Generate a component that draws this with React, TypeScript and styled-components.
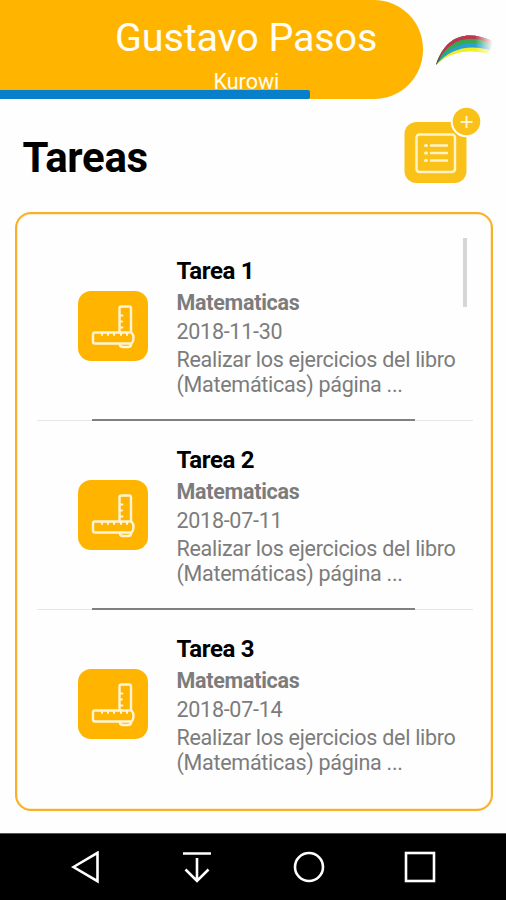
import React from "react";
import styled, { createGlobalStyle } from "styled-components";

const GlobalStyle = createGlobalStyle`
  * { box-sizing: border-box; }
  body { margin: 0; background: #fefefe; font-family: Roboto, "Liberation Sans", sans-serif; }
`;

const Screen = styled.main`
  display: flex;
  flex-direction: column;
  width: 506px;
  height: 900px;
  overflow: hidden;
`;

const Header = styled.header`
  display: flex;
  height: 99px;
`;

const Banner = styled.div`
  display: flex;
  flex-direction: column;
  width: 422.5px;
  height: 98.5px;
  background: #ffb500;
  border-radius: 0 49px 49px 0;
  color: #fffdf5;
`;

const UserName = styled.div`
  height: 72px;
  padding: 14px 0 0 115px;
  font-size: 39.5px;
  line-height: 48px;
  letter-spacing: -0.12px;
  white-space: nowrap;
`;

const School = styled.div`
  height: 18px;
  padding-left: 213.5px;
  font-size: 21.5px;
  line-height: 20px;
`;

const Progress = styled.div`
  width: 310px;
  height: 8.5px;
  background: #087fca;
  border-radius: 0 2px 2px 0;
`;

const Logo = styled.svg`
  width: 64px;
  height: 40px;
  margin: 30px 0 0 10px;
`;

const TitleBar = styled.section`
  display: flex;
  justify-content: space-between;
  height: 113px;
  padding: 5px 22px 0 22.5px;
`;

const Title = styled.h1`
  margin: 29px 0 0;
  font-size: 42px;
  line-height: 50px;
  letter-spacing: -0.3px;
  font-weight: 700;
  color: #000;
`;

const AddButton = styled.button`
  width: 82px;
  height: 82px;
  padding: 0;
  border: 0;
  background: none;
  svg { display: block; }
`;

const Card = styled.section`
  display: flex;
  width: 478px;
  height: 599px;
  margin-left: 14.5px;
  padding: 18px 17.5px 0 20px;
  border: 2px solid #f7b02a;
  border-radius: 16px;
  box-shadow: inset 0 0 0 0.5px #fbdc9c;
`;

const List = styled.ul`
  position: relative;
  flex: 1;
  margin: 0;
  padding: 0;
  list-style: none;
`;

const ScrollThumb = styled.div`
  position: absolute;
  right: 6px;
  top: 5.5px;
  width: 4.5px;
  height: 69.5px;
  background: #d6d6d6;
`;

const Row = styled.li`
  display: grid;
  grid-template-columns: 70px 1fr;
  grid-template-rows: 187px 2px;
  column-gap: 29px;
  padding-left: 41px;
`;

const SubjectIcon = styled.svg`
  width: 70px;
  height: 70px;
  margin-top: 58.5px;
`;

const Details = styled.div`
  padding-top: 24px;
  color: #7c7c7c;
  font-size: 21.5px;
  line-height: 29px;
  letter-spacing: -0.28px;
  white-space: nowrap;
`;

const TaskName = styled.h2`
  margin: 0 0 2px;
  font-size: 24px;
  line-height: 30px;
  letter-spacing: -0.35px;
  font-weight: 700;
  color: #000;
`;

const Subject = styled.div`
  font-weight: 700;
`;

const Description = styled.p`
  margin: 2px 0 0;
  line-height: 24.7px;
`;

const Divider = styled.div`
  grid-column: 1 / -1;
  display: flex;
  align-items: flex-end;
  width: 436px;
  margin-left: -41px;
`;

const Line = styled.span<{ $strong?: boolean }>`
  flex: ${(p) => (p.$strong ? "0 0 323px" : "0 0 55px")};
  height: ${(p) => (p.$strong ? "2.5px" : "1px")};
  background: ${(p) => (p.$strong ? "#808080" : "#e6e6e6")};
  &:last-child { flex: 1; }
`;

const NavBar = styled.nav`
  display: flex;
  justify-content: space-between;
  height: 67px;
  margin-top: 22px;
  padding: 17px 69px 0;
  background: #000;
  border-top: 1px solid #555;
  svg { display: block; width: 34px; height: 34px; fill: none; stroke: #fff; stroke-width: 2.6; }
`;

const RainbowLogo = () => (
  <Logo viewBox="0 0 64 40">
    <defs>
      <linearGradient id="fade" x1="0" x2="1">
        <stop offset="0" stopColor="#fff" />
        <stop offset=".7" stopColor="#fff" />
        <stop offset="1" stopColor="#fff" stopOpacity="0" />
      </linearGradient>
      <mask id="tail" maskUnits="userSpaceOnUse" x="0" y="0" width="64" height="40">
        <rect width="60" height="40" fill="url(#fade)" />
      </mask>
      <filter id="soft" colorInterpolationFilters="sRGB"><feGaussianBlur stdDeviation=".5" /></filter>
    </defs>
    <g mask="url(#tail)" filter="url(#soft)">
      <path d="M3 35C13 4 35 0 60 11L56 24C37 19 18 21 3 35Z" fill="#f2ee24" />
      <path d="M3 35C13 4 35 0 60 11L57 20C36 14 17 18 3 35Z" fill="#2a9fd0" />
      <path d="M3 35C13 4 35 0 60 11L58 17C36 8 16 14 3 35Z" fill="#36a852" />
      <path d="M3 35C13 4 35 0 60 11L58 14C36 3 15 9 3 35Z" fill="#c43350" />
      <path d="M3 35Q5 29 8 25Q7 30 3 35Z" fill="#22615a" />
    </g>
  </Logo>
);

const AddTaskIcon = () => (
  <svg width="82" height="82" viewBox="0 0 82 82">
    <rect x="2.5" y="18" width="62" height="61" rx="12" fill="#fac119" />
    <g fill="none" stroke="#fff4c9" strokeWidth="2.5" strokeLinecap="round">
      <rect x="14.5" y="30.5" width="38.5" height="37.5" rx="3" />
      <path d="M29 41.5H45M29 49H45M29 56.5H45" />
      <path d="M23.5 41.5H24.5M23.5 49H24.5M23.5 56.5H24.5" strokeWidth="3" />
    </g>
    <circle cx="64.5" cy="17.5" r="14.8" fill="#fac119" stroke="#fff" strokeWidth="2" />
    <path d="M58.5 18H70.5M64.5 12V24" stroke="#fff4c9" strokeWidth="2" />
  </svg>
);

const RulersIcon = () => (
  <SubjectIcon viewBox="0 0 70 70">
    <rect width="70" height="70" rx="13" fill="#ffb500" />
    <g fill="none" stroke="#fff5d6" strokeWidth="2.4" strokeLinecap="round" strokeLinejoin="round">
      <path d="M41.5 41V17.5Q41.5 15.5 43.5 15.5H51Q53 15.5 53 17.5V41" />
      <path d="M42 24.5H44.5M42 30.5H44M42 36.5H44.5" strokeWidth="2" />
      <path d="M17 41.5H53.5Q55.5 43.5 55.5 47Q55.5 50.5 53.5 52.5H17Q15 52.5 15 50.5V43.5Q15 41.5 17 41.5Z" />
      <path d="M24 42V44M30 42V44M36 42V44M43 42V44M49 42V44" strokeWidth="2" />
      <path d="M42 53Q42 56 45 56H50Q53 56 53 53" strokeWidth="2.6" />
    </g>
  </SubjectIcon>
);

const tasks = [
  { name: "Tarea 1", date: "2018-11-30" },
  { name: "Tarea 2", date: "2018-07-11" },
  { name: "Tarea 3", date: "2018-07-14" },
];

export default function App() {
  return (
    <Screen>
      <GlobalStyle />
      <Header>
        <Banner>
          <UserName>Gustavo Pasos</UserName>
          <School>Kurowi</School>
          <Progress />
        </Banner>
        <RainbowLogo />
      </Header>
      <TitleBar>
        <Title>Tareas</Title>
        <AddButton aria-label="Agregar tarea"><AddTaskIcon /></AddButton>
      </TitleBar>
      <Card>
        <List>
          {tasks.map((task, i) => (
            <Row key={task.name}>
              <RulersIcon />
              <Details>
                <TaskName>{task.name}</TaskName>
                <Subject>Matematicas</Subject>
                <div>{task.date}</div>
                <Description>
                  Realizar los ejercicios del libro<br />(Matemáticas) página ...
                </Description>
              </Details>
              {i < tasks.length - 1 && (
                <Divider><Line /><Line $strong /><Line /></Divider>
              )}
            </Row>
          ))}
          <ScrollThumb />
        </List>
      </Card>
      <NavBar>
        <svg viewBox="0 0 34 34"><path d="M4.5 16L28.5 1.8V30.2Z" /></svg>
        <svg viewBox="0 0 34 34"><path d="M3 2.5H31M17 7V30M5.5 18.5L17 30L28.5 18.5" /></svg>
        <svg viewBox="0 0 34 34"><circle cx="17" cy="16" r="14" /></svg>
        <svg viewBox="0 0 34 34"><rect x="3" y="2" width="28" height="28" /></svg>
      </NavBar>
    </Screen>
  );
}
